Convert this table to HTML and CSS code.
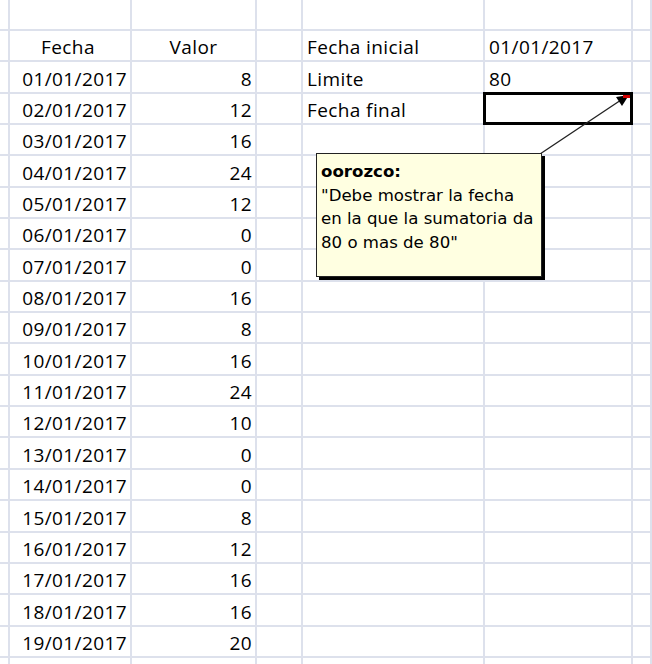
FILE: index.html
```html
<!DOCTYPE html>
<html lang="es">
<head>
<meta charset="utf-8">
<title>Hoja</title>
<link rel="stylesheet" href="styles.css">
</head>
<body>
<div class="sheet">
  <div class="grid">
    <!-- top partial row -->
    <div class="c"></div><div class="c"></div><div class="c"></div><div class="c"></div><div class="c"></div><div class="c"></div><div class="c"></div>
    <!-- header -->
    <div class="c"></div><div class="c ctr">Fecha</div><div class="c ctr">Valor</div><div class="c"></div><div class="c lft">Fecha inicial</div><div class="c lft">01/01/2017</div><div class="c"></div>
    <div class="c"></div><div class="c rgt">01/01/2017</div><div class="c rgt">8</div><div class="c"></div><div class="c lft">Limite</div><div class="c lft">80</div><div class="c"></div>
    <div class="c"></div><div class="c rgt">02/01/2017</div><div class="c rgt">12</div><div class="c"></div><div class="c lft">Fecha final</div><div class="c selected"><span class="marker"></span></div><div class="c"></div>
    <div class="c"></div><div class="c rgt">03/01/2017</div><div class="c rgt">16</div><div class="c"></div><div class="c"></div><div class="c"></div><div class="c"></div>
    <div class="c"></div><div class="c rgt">04/01/2017</div><div class="c rgt">24</div><div class="c"></div><div class="c"></div><div class="c"></div><div class="c"></div>
    <div class="c"></div><div class="c rgt">05/01/2017</div><div class="c rgt">12</div><div class="c"></div><div class="c"></div><div class="c"></div><div class="c"></div>
    <div class="c"></div><div class="c rgt">06/01/2017</div><div class="c rgt">0</div><div class="c"></div><div class="c"></div><div class="c"></div><div class="c"></div>
    <div class="c"></div><div class="c rgt">07/01/2017</div><div class="c rgt">0</div><div class="c"></div><div class="c"></div><div class="c"></div><div class="c"></div>
    <div class="c"></div><div class="c rgt">08/01/2017</div><div class="c rgt">16</div><div class="c"></div><div class="c"></div><div class="c"></div><div class="c"></div>
    <div class="c"></div><div class="c rgt">09/01/2017</div><div class="c rgt">8</div><div class="c"></div><div class="c"></div><div class="c"></div><div class="c"></div>
    <div class="c"></div><div class="c rgt">10/01/2017</div><div class="c rgt">16</div><div class="c"></div><div class="c"></div><div class="c"></div><div class="c"></div>
    <div class="c"></div><div class="c rgt">11/01/2017</div><div class="c rgt">24</div><div class="c"></div><div class="c"></div><div class="c"></div><div class="c"></div>
    <div class="c"></div><div class="c rgt">12/01/2017</div><div class="c rgt">10</div><div class="c"></div><div class="c"></div><div class="c"></div><div class="c"></div>
    <div class="c"></div><div class="c rgt">13/01/2017</div><div class="c rgt">0</div><div class="c"></div><div class="c"></div><div class="c"></div><div class="c"></div>
    <div class="c"></div><div class="c rgt">14/01/2017</div><div class="c rgt">0</div><div class="c"></div><div class="c"></div><div class="c"></div><div class="c"></div>
    <div class="c"></div><div class="c rgt">15/01/2017</div><div class="c rgt">8</div><div class="c"></div><div class="c"></div><div class="c"></div><div class="c"></div>
    <div class="c"></div><div class="c rgt">16/01/2017</div><div class="c rgt">12</div><div class="c"></div><div class="c"></div><div class="c"></div><div class="c"></div>
    <div class="c"></div><div class="c rgt">17/01/2017</div><div class="c rgt">16</div><div class="c"></div><div class="c"></div><div class="c"></div><div class="c"></div>
    <div class="c"></div><div class="c rgt">18/01/2017</div><div class="c rgt">16</div><div class="c"></div><div class="c"></div><div class="c"></div><div class="c"></div>
    <div class="c"></div><div class="c rgt">19/01/2017</div><div class="c rgt">20</div><div class="c"></div><div class="c"></div><div class="c"></div><div class="c"></div>
    <div class="c"></div><div class="c"></div><div class="c"></div><div class="c"></div><div class="c"></div><div class="c"></div><div class="c"></div>
  </div>

  <svg class="arrow" width="652" height="664" viewBox="0 0 652 664" aria-hidden="true">
    <line x1="540" y1="154" x2="621" y2="100" stroke="#222" stroke-width="1.3"/>
    <polygon points="629,95 616,97 622,106" fill="#000"/>
  </svg>

  <div class="comment">
    <div class="author">oorozco:</div>
    <div class="note">"Debe mostrar la fecha<br>en la que la sumatoria da<br>80 o mas de 80"</div>
  </div>
</div>
</body>
</html>
```

FILE: styles.css
```css
html, body {
  margin: 0;
  padding: 0;
  background: #ffffff;
}

.sheet {
  position: relative;
  width: 652px;
  height: 664px;
  overflow: hidden;
}

.grid {
  display: grid;
  grid-template-columns: 6px 126px 125px 46px 182px 148px 1fr;
  grid-template-rows: 31px repeat(21, 31.35px);
  font-family: "Open Sans", "Liberation Sans", sans-serif;
  font-size: 19px;
  letter-spacing: 0.4px;
  color: #000000;
}

.c {
  border-right: 2px solid #dde1ec;
  border-bottom: 2px solid #dde1ec;
  display: flex;
  align-items: flex-end;
  padding: 0 4px 1px 4px;
  white-space: nowrap;
  line-height: 24px;
  overflow: visible;
}

.ctr { justify-content: center; }
.rgt { justify-content: flex-end; padding-right: 3px; }
.lft { justify-content: flex-start; padding-left: 4px; }

.selected {
  position: relative;
}

.selected::after {
  content: "";
  position: absolute;
  left: -2px;
  top: -2px;
  right: -2px;
  bottom: -2px;
  border: 3px solid #000;
}

.marker {
  position: absolute;
  right: 1px;
  top: 1px;
  width: 7px;
  height: 3px;
  background: #d00000;
  z-index: 2;
}

.arrow {
  position: absolute;
  left: 0;
  top: 0;
  pointer-events: none;
}

.comment {
  position: absolute;
  left: 316px;
  top: 153px;
  width: 216px;
  height: 112px;
  padding: 6px 4px 4px 4px;
  background: #ffffe1;
  border: 1px solid #222;
  box-shadow: 3px 3px 0 #000;
  font-family: "DejaVu Sans", "Liberation Sans", sans-serif;
  font-size: 16.6px;
  line-height: 23.5px;
  color: #000;
}

.author {
  font-weight: bold;
}
```
